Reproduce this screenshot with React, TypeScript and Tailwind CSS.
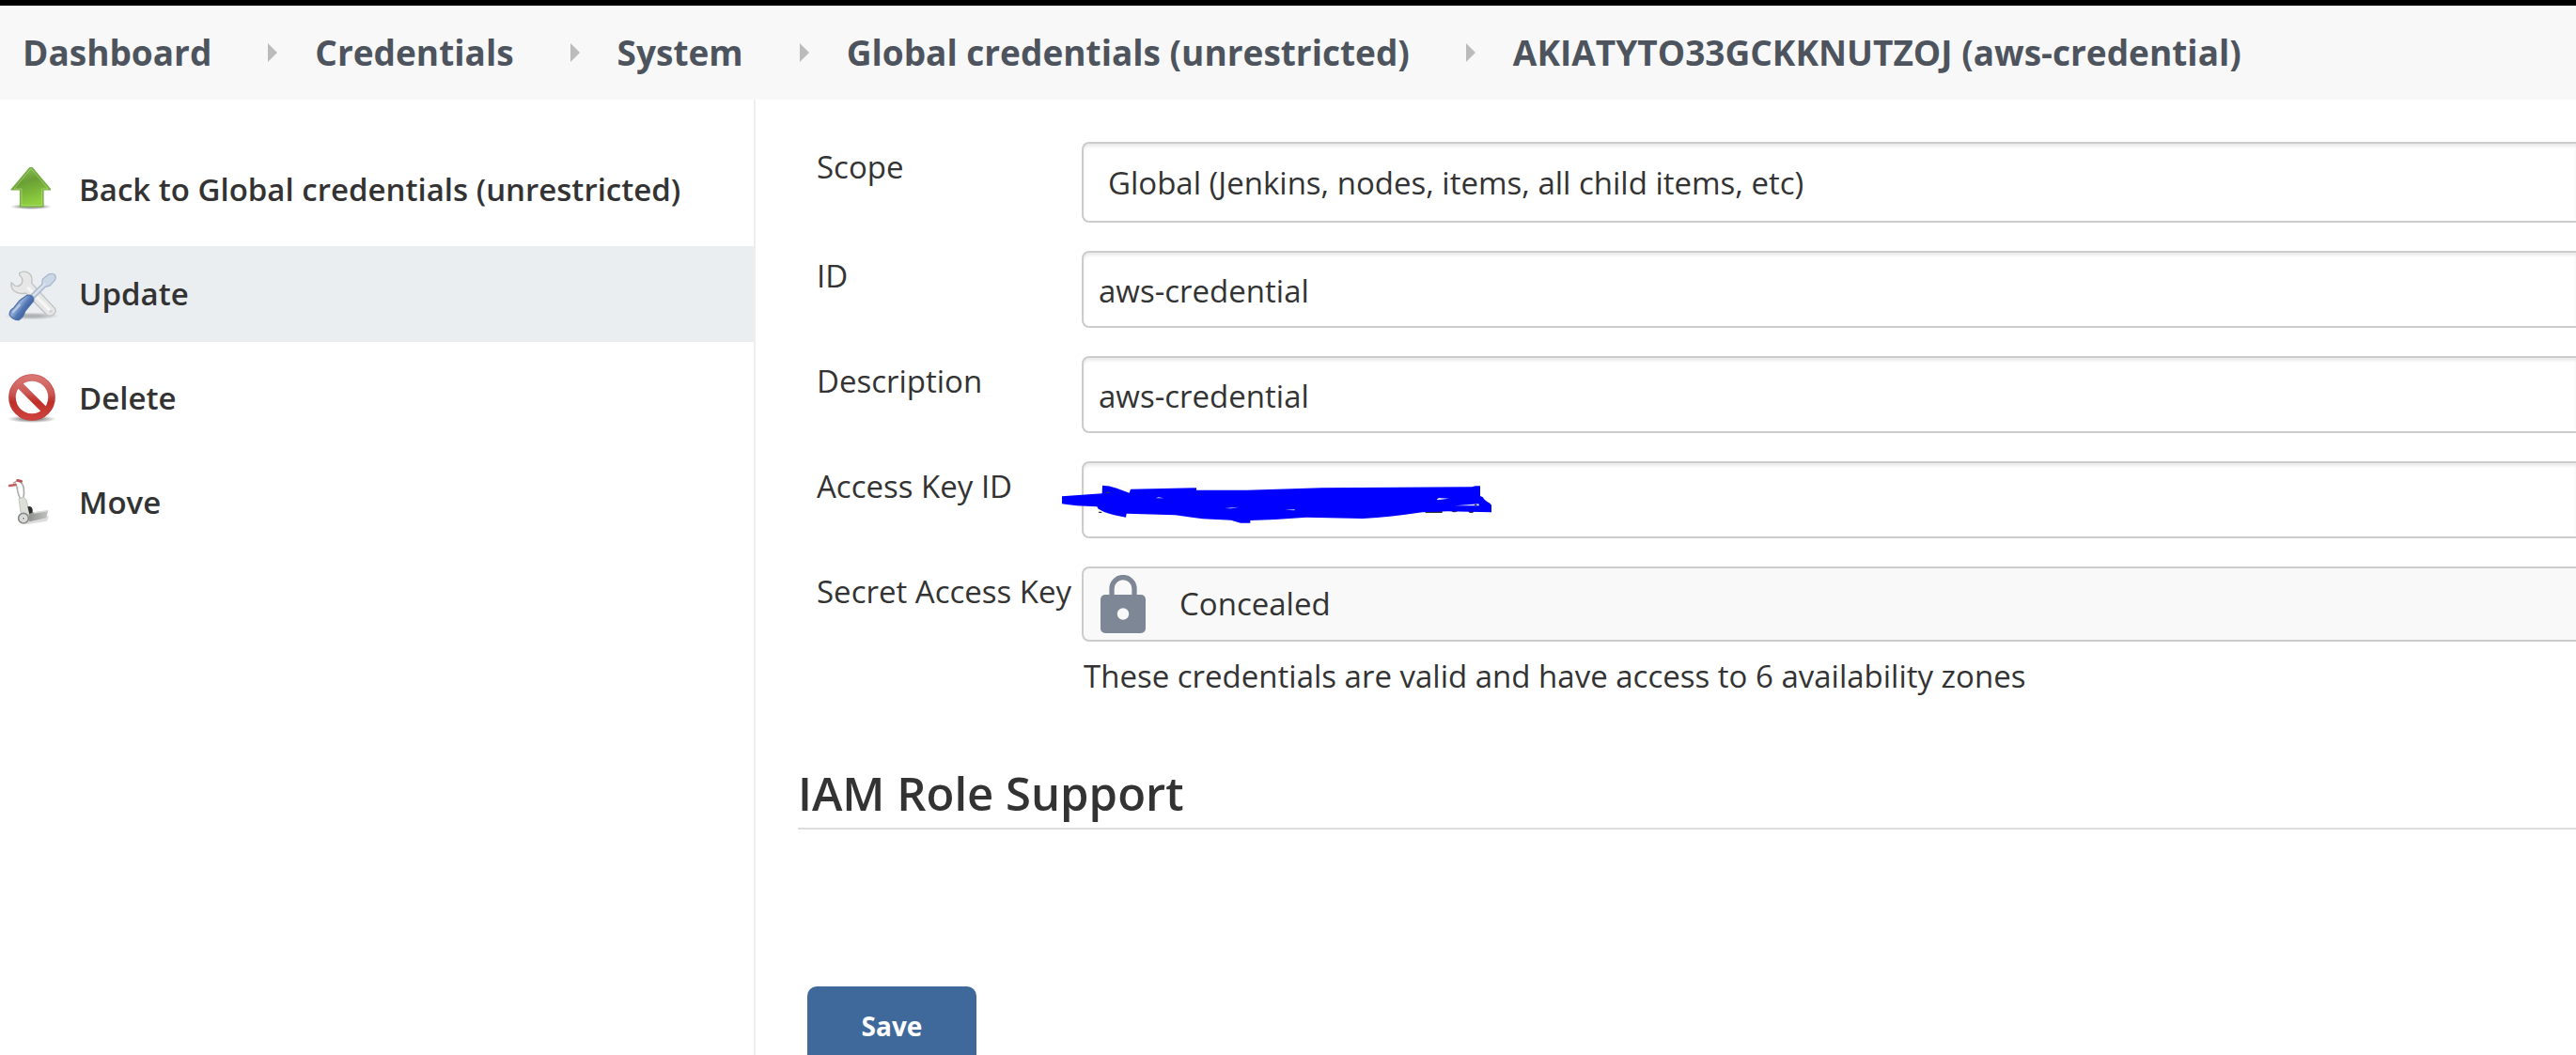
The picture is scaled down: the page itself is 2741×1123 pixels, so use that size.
import React from "react";

const crumbs = [
  "Dashboard",
  "Credentials",
  "System",
  "Global credentials (unrestricted)",
  "AKIATYTO33GCKKNUTZOJ (aws-credential)",
];

function UpArrowIcon() {
  return (
    <svg viewBox="-2 3 48 48" className="size-12" aria-hidden="true">
      <defs>
        <linearGradient id="upFill" x1="0" y1="0" x2="0.3" y2="1">
          <stop offset="0" stopColor="#92c65c" />
          <stop offset="0.45" stopColor="#6a9f35" />
          <stop offset="1" stopColor="#8fd03f" />
        </linearGradient>
        <radialGradient id="upShadow">
          <stop offset="0.5" stopColor="#000" stopOpacity="0.35" />
          <stop offset="1" stopColor="#000" stopOpacity="0" />
        </radialGradient>
      </defs>
      <ellipse cx="25" cy="45" rx="22" ry="3" fill="url(#upShadow)" />
      <path d="M25 2 L46 27 H38 V45 H13.500 V27 H4 Z" fill="url(#upFill)" stroke="#76ad45" strokeWidth="1.200" strokeLinejoin="round" />
      <path d="M25 4.500 L43 26 H36.500 V43.500 H15 V26 H7 Z" fill="none" stroke="#b5dc85" strokeWidth="1" opacity="0.6" />
    </svg>
  );
}

function ToolsIcon() {
  return (
    <svg viewBox="18 15 180 168" className="h-14 w-15 overflow-visible" aria-hidden="true">
      <defs>
        <linearGradient id="handle" gradientUnits="userSpaceOnUse" x1="45" y1="125" x2="85" y2="155">
          <stop offset="0" stopColor="#5478b5" />
          <stop offset="0.35" stopColor="#93add8" />
          <stop offset="0.65" stopColor="#5579b6" />
          <stop offset="1" stopColor="#40629f" />
        </linearGradient>
        <radialGradient id="toolShadow">
          <stop offset="0.3" stopColor="#000" stopOpacity="0.25" />
          <stop offset="1" stopColor="#000" stopOpacity="0" />
        </radialGradient>
      </defs>
      <ellipse cx="102" cy="169" rx="88" ry="12" fill="url(#toolShadow)" />
      <path
        d="M62 32 Q80 22 94 34 Q105 44 101 64 L176 146 Q182 160 164 168 Q154 170 148 164 L82 96 Q62 101 46 90 Q34 80 36 62 L47 72 Q62 78 70 64 Q76 50 62 38 Z"
        fill="#e6e7e6"
        stroke="#bfc2c2"
        strokeWidth="4"
        strokeLinejoin="round"
      />
      <path d="M90 80 L160 152" stroke="#f6f6f5" strokeWidth="9" strokeLinecap="round" />
      <circle cx="162" cy="154" r="5" fill="#cfd1d2" />
      <path d="M99 102 L134 68 L136 52 L154 37 Q168 30 176 39 Q180 47 174 56 L159 72 L145 76 L110 111 Z" fill="#ccd7e6" stroke="#a9b8cf" strokeWidth="4" strokeLinejoin="round" />
      <path d="M106 104 L145 65" stroke="#dfe2e8" strokeWidth="5" />
      <path d="M82 106 Q94 98 104 108 Q112 118 102 127 L80 154 Q76 172 60 182 Q40 182 30 164 Q30 150 44 143 L62 120 Z" fill="url(#handle)" stroke="#4c6eaa" strokeWidth="3.500" strokeLinejoin="round" />
      <path d="M42 156 L62 134" stroke="#c3d2ea" strokeWidth="7" strokeLinecap="round" opacity="0.8" />
    </svg>
  );
}

function NoEntryIcon() {
  return (
    <svg viewBox="0 0 56 56" className="size-14" aria-hidden="true">
      <defs>
        <linearGradient id="ring" gradientUnits="userSpaceOnUse" x1="0" y1="2" x2="0" y2="52">
          <stop offset="0" stopColor="#dc7b78" />
          <stop offset="0.4" stopColor="#cb5a55" />
          <stop offset="0.6" stopColor="#bf2f29" />
          <stop offset="1" stopColor="#cf4540" />
        </linearGradient>
        <radialGradient id="ringShadow">
          <stop offset="0.4" stopColor="#000" stopOpacity="0.4" />
          <stop offset="1" stopColor="#000" stopOpacity="0" />
        </radialGradient>
      </defs>
      <ellipse cx="28" cy="50" rx="26" ry="4" fill="url(#ringShadow)" />
      <circle cx="28" cy="27" r="21" fill="#fff" stroke="url(#ring)" strokeWidth="7.500" />
      <path d="M13 12 L43 42" stroke="url(#ring)" strokeWidth="7.500" />
      <circle cx="28" cy="27" r="24.300" fill="none" stroke="#b9403b" strokeWidth="0.800" opacity="0.6" />
    </svg>
  );
}

function HandTruckIcon() {
  return (
    <svg viewBox="18 24 144 162" className="h-[54px] w-12" aria-hidden="true">
      <defs>
        <linearGradient id="blade" x1="0" y1="0" x2="1" y2="0">
          <stop offset="0" stopColor="#8f918f" />
          <stop offset="1" stopColor="#c2c4c1" />
        </linearGradient>
      </defs>
      <path d="M70 170 L90 174 L150 164 L156 148 L90 158 Z" fill="#777" opacity="0.25" />
      <path d="M48 44 Q56 52 56 66 Q58 82 66 94 M64 38 Q76 48 76 64 Q78 76 74 92" fill="none" stroke="#a9aaa9" strokeWidth="5" />
      <path d="M52 46 Q60 54 60 68 Q62 80 68 90" fill="none" stroke="#f0f0ef" strokeWidth="3" />
      <path d="M60 92 L76 88 L84 96 L96 142 L78 150 L66 136 Z" fill="#dcded8" stroke="#c3c5bf" strokeWidth="3" />
      <path d="M30 51 L50 48" stroke="#c25f5c" strokeWidth="7" strokeLinecap="round" />
      <path d="M42 43 L54 36" stroke="#b5938f" strokeWidth="4" />
      <path d="M56 34 L68 37" stroke="#b8504d" strokeWidth="8" strokeLinecap="round" />
      <path d="M88 118 Q102 114 104 128 L104 138 L94 142 Z" fill="#2b2f30" />
      <path d="M92 142 L108 136 L154 130 L148 154 L94 166 Z" fill="url(#blade)" />
      <path d="M108 138 L153 131" stroke="#dedfdc" strokeWidth="4" />
      <circle cx="75" cy="155" r="16" fill="#e0e1de" stroke="#888a87" strokeWidth="5" />
      <circle cx="75" cy="155" r="8" fill="#f3f3f1" stroke="#b6b8b4" strokeWidth="2" />
      <circle cx="75" cy="155" r="3" fill="#777" />
    </svg>
  );
}

function LockIcon() {
  return (
    <svg viewBox="0 0 48 62" className="h-[62px] w-12 shrink-0" aria-hidden="true">
      <path d="M12 24 V14.500 a12 12 0 0 1 24 0 V24" fill="none" stroke="#7d8796" strokeWidth="5.300" />
      <rect x="0" y="21" width="48" height="41" rx="5" fill="#7d8796" />
      <circle cx="24" cy="41.500" r="6.200" fill="#f9f9f9" />
    </svg>
  );
}

function Scribble() {
  return (
    <svg viewBox="0 0 1374 123" className="pointer-events-none absolute -left-[21px] top-[25px] h-[41px] w-[458px]" aria-hidden="true">
      <path d="M117 86 h10 v4 h-10 z M1160 84 h54 v6 h-54 z M1243 84 q8 8 20 0 z M1297 84 h20 l-6 6 h-10 z" fill="#333" />
      <path
        d="M0 37 L128 28 L129 2 Q150 2 175 11 L215 26 L219 14 L429 10 V17 L590 17 L830 10 L1310 7 L1319 4 L1335 4 V36 L1344 40 Q1346 49 1366 59 L1371 65 V88 L1230 85 L1150 88 Q1050 103 960 108 L780 104 L680 111 L601 114 V122 L570 122 L540 113 L450 109 L362 97 L206 92 L204 104 Q165 98 135 87 L116 77 L112 70 Q40 68 0 61 Z"
        fill="#00f"
      />
      <path d="M299 43 L308 40 L325 43 Z M520 75 L565 71 L540 76 Z M712 80 L744 79 L742 82 Z M1196 46 L1204 42 L1235 44 L1199 49 Z M1255 67 L1330 61 L1332 67 Z" fill="#ddddff" />
      <path d="M1317 62 h7 v5 h-7 z M140 23 h12 v4 h-12 z" fill="#336" />
    </svg>
  );
}

const tasks = [
  { label: "Back to Global credentials (unrestricted)", icon: <UpArrowIcon />, active: false },
  { label: "Update", icon: <ToolsIcon />, active: true },
  { label: "Delete", icon: <NoEntryIcon />, active: false },
  { label: "Move", icon: <HandTruckIcon />, active: false },
];

const fieldBox =
  "w-full rounded-l-lg border-2 border-r-0 border-[#ccc] text-[33px] text-[#333] outline-none";
const inset = "bg-white pt-0.5 shadow-[inset_0_3px_3px_rgba(0,0,0,0.08)]";

function Row({ id, label, children }: { id: string; label: string; children: React.ReactNode }) {
  return (
    <div className="flex items-start">
      <label htmlFor={id} className="w-[282px] shrink-0 whitespace-nowrap pt-1 text-[33px] leading-[46px]">
        {label}
      </label>
      <div className="relative min-w-0 flex-1">{children}</div>
    </div>
  );
}

export default function App() {
  return (
    <div className="flex h-screen flex-col overflow-hidden bg-white font-['Open_Sans','Noto_Sans',sans-serif] text-[#333]">
      <header className="shrink-0 border-t-6 border-black bg-[#f8f8f8]">
        <nav aria-label="Breadcrumb" className="pl-6">
          <ol className="flex h-[100px] items-center whitespace-nowrap text-[37px] font-bold text-[#4d545d]">
            {crumbs.map((crumb, i) => (
              <li key={crumb} className="flex items-center">
                {i > 0 && (
                  <svg viewBox="0 0 10 20" className="ml-15 mr-10 h-5 w-2.5" aria-hidden="true">
                    <path d="M0 0 L10 10 L0 20 Z" fill="#bbb" />
                  </svg>
                )}
                <a href="#">{crumb}</a>
              </li>
            ))}
          </ol>
        </nav>
      </header>

      <div className="flex min-h-0 flex-1">
        <aside className="w-[804px] shrink-0 border-r-2 border-[#eee] pt-[45px]">
          <ul className="flex flex-col gap-[9px]">
            {tasks.map((task) => (
              <li key={task.label}>
                <a
                  href="#"
                  className={
                    "flex h-[102px] items-center whitespace-nowrap text-[33px] font-semibold " +
                    (task.active ? "bg-[#eaeef1]" : "")
                  }
                >
                  <span className="flex w-[84px] shrink-0 pl-1.5 [&>svg]:shrink-0">{task.icon}</span>
                  {task.label}
                </a>
              </li>
            ))}
          </ul>
        </aside>

        <main className="min-w-0 flex-1 pl-[45px] pt-[45px]">
          <form>
            <div className="flex flex-col gap-[30px] pl-5">
              <Row id="scope" label="Scope">
                <select id="scope" className={`${fieldBox} ${inset} block h-[86px] appearance-none pl-[26px]`}>
                  <option>Global (Jenkins, nodes, items, all child items, etc)</option>
                </select>
              </Row>
              <Row id="id" label="ID">
                <input id="id" defaultValue="aws-credential" className={`${fieldBox} ${inset} block h-[82px] pl-4`} />
              </Row>
              <Row id="description" label="Description">
                <input id="description" defaultValue="aws-credential" className={`${fieldBox} ${inset} block h-[82px] pl-4`} />
              </Row>
              <Row id="access" label="Access Key ID">
                <input id="access" className={`${fieldBox} ${inset} block h-[82px] pl-4`} />
                <Scribble />
              </Row>
              <Row id="secret" label="Secret Access Key">
                <div className={`${fieldBox} flex h-20 items-center gap-9 bg-[#f9f9f9] pl-[18px]`}>
                  <LockIcon />
                  <output id="secret">Concealed</output>
                </div>
                <p className="pl-0.5 pt-3.5 text-[33px] leading-[46px]">
                  These credentials are valid and have access to 6 availability zones
                </p>
              </Row>
            </div>
            <h2 className="mt-[68px] border-b-2 border-[#ddd] pb-1 text-[49px] font-semibold leading-[66px]">
              IAM Role Support
            </h2>
            <button
              type="button"
              className="ml-2.5 mt-[167px] h-[84px] w-[180px] rounded-[10px] bg-[#3f699b] text-[28px] font-bold text-white"
            >
              Save
            </button>
          </form>
        </main>
      </div>
    </div>
  );
}
